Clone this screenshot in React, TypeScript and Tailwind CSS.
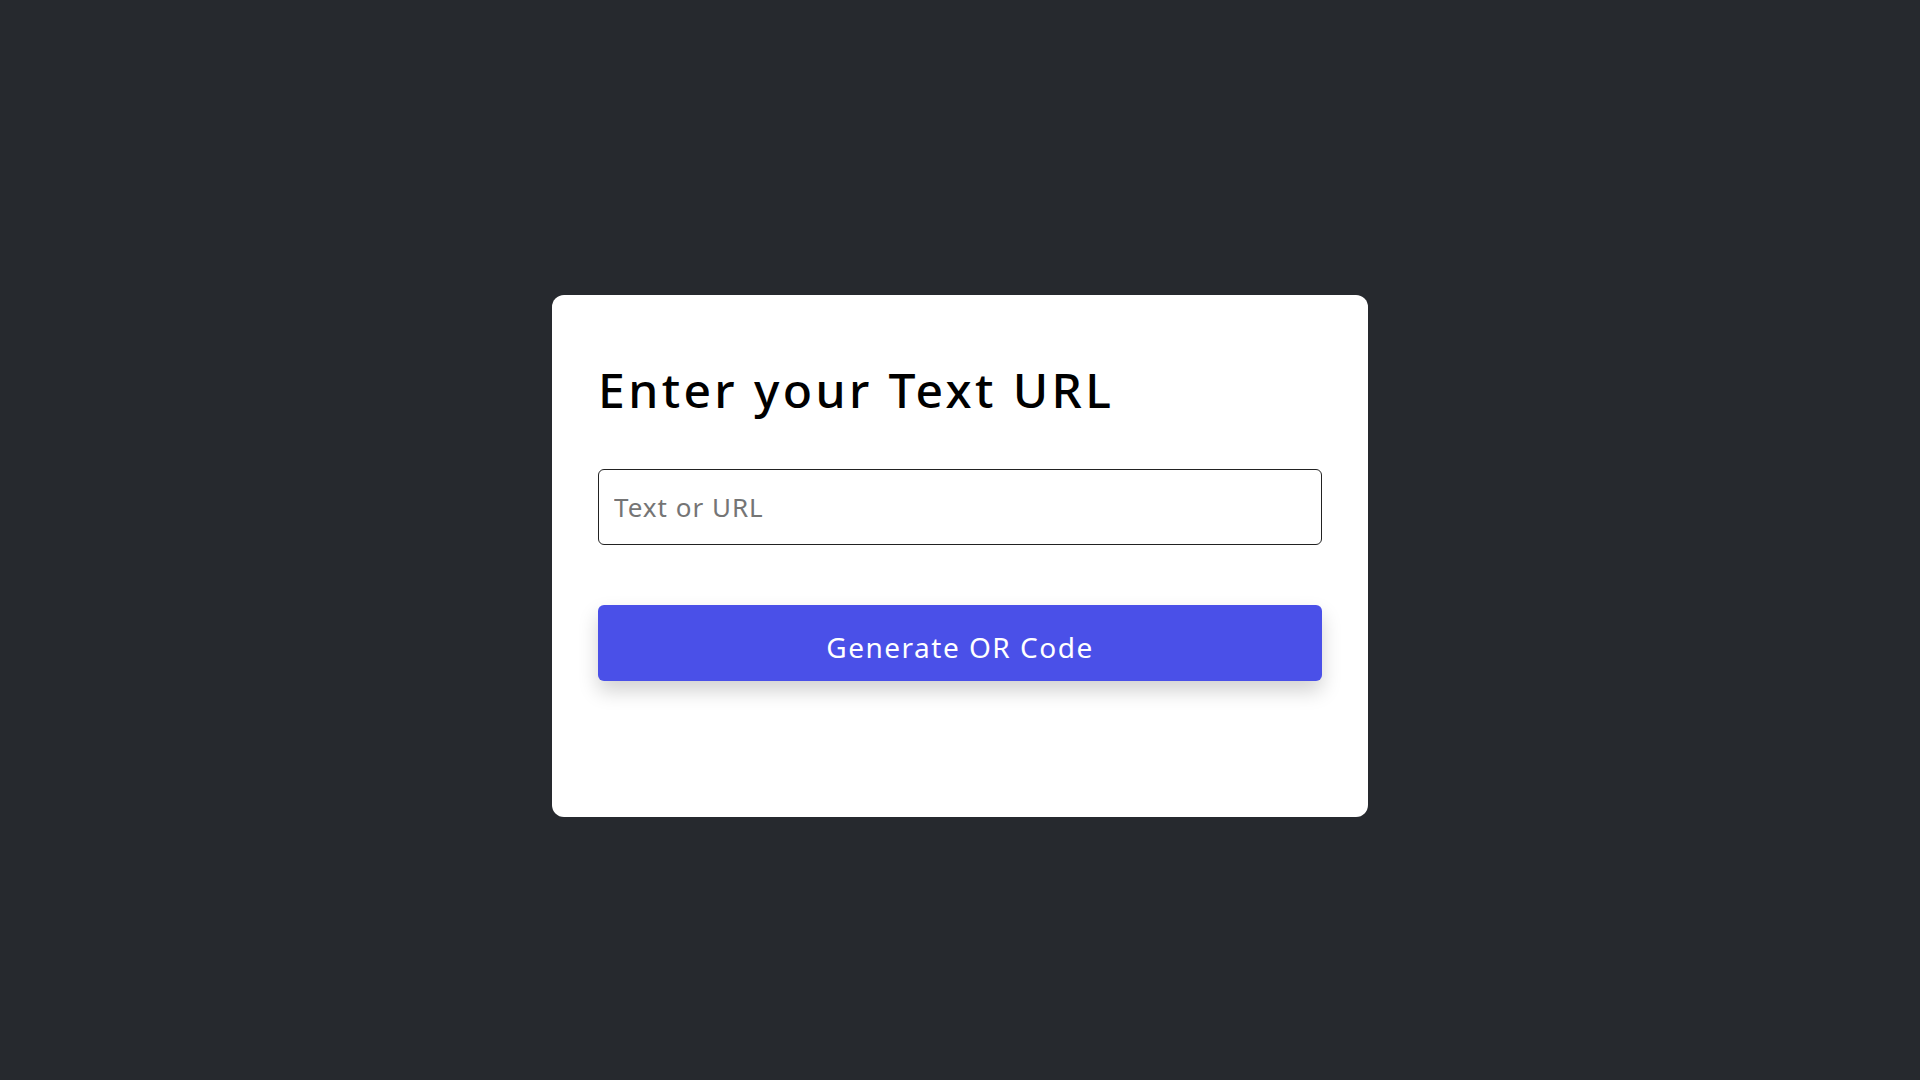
import React from "react";

export default function App() {
  return (
    <div
      className="min-h-screen w-full bg-[#26292e] flex items-center justify-center pt-[32px]"
      style={{ fontFamily: '"Noto Sans", Lato, sans-serif' }}
    >
      <div className="w-[816px] h-[522px] bg-white rounded-[12px] px-[46px] pt-[66px]">
        <h1 className="text-[48px] leading-[58px] font-medium tracking-[3.4px] text-black">Enter your Text URL</h1>
        <input
          type="text"
          placeholder="Text or URL"
          className="mt-[50px] block w-full h-[76px] border border-[#222222] rounded-[6px] px-[15px] text-[26px] tracking-[1px] text-black placeholder:text-[#757575] outline-none"
        />
        <button className="mt-[60px] block w-full h-[76px] pt-[8px] rounded-[6px] bg-[#4a50e8] text-white text-[28px] tracking-[1.5px] shadow-[0_10px_20px_rgba(0,0,0,0.18)]">
          Generate OR Code
        </button>
      </div>
    </div>
  );
}
